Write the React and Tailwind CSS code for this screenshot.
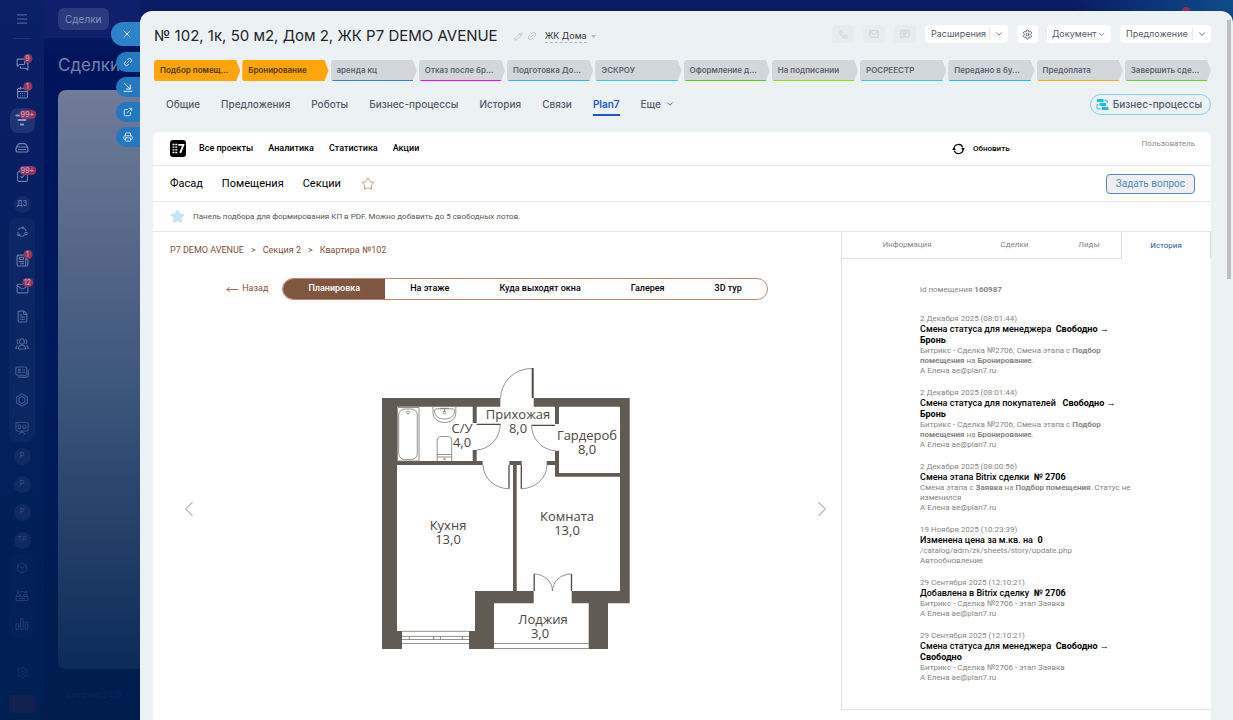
import React, { useState } from 'react';
import {
    Box,
    CalendarDays,
    ChevronDown,
    ChevronLeft,
    ChevronRight,
    ExternalLink,
    FileText,
    Link2,
    Mail,
    Menu,
    MessageSquareText,
    MessagesSquare,
    MoveLeft,
    Newspaper,
    Pencil,
    Phone,
    Printer,
    Settings,
    SquareCheck,
    Star,
    X
} from 'lucide-react';

const FunnelIcon = () => (
    <svg width="14" height="14" viewBox="0 0 14 14" fill="none" stroke="currentColor" strokeWidth="2" strokeLinecap="round">
        <path d="M1.500 2.500h11M3.500 7h7M5.800 11.500h2.400" />
    </svg>
);

const DriveIcon = () => (
    <svg width="14" height="14" viewBox="0 0 14 14" fill="none" stroke="currentColor" strokeWidth="1.200" strokeLinejoin="round">
        <path d="M1.500 6 3.200 3.400C3.600 2.900 4 2.600 4.600 2.600h4.800c.6 0 1 .3 1.400.8L12.500 6" />
        <rect x="1" y="6" width="12" height="5" rx="1.600" />
        <path d="M3.500 8.500h7" strokeLinecap="round" />
    </svg>
);

const RingIcon = () => (
    <svg width="12" height="12" viewBox="0 0 12 12" fill="none" stroke="currentColor" strokeWidth="1.100">
        <path d="M2.300 4A4.200 4.200 0 0 1 6 1.800M8 2.300A4.200 4.200 0 0 1 10 5M8.500 9.300A4.200 4.200 0 0 1 4 9.700M2 7.500A4.200 4.200 0 0 1 1.800 6" />
        <circle cx="2.700" cy="8.800" r="1" />
        <circle cx="10" cy="7.500" r="1.300" />
        <circle cx="7" cy="1.800" r=".8" />
    </svg>
);

const PeopleIcon = () => (
    <svg width="14" height="14" viewBox="0 0 14 14" fill="none" stroke="currentColor" strokeWidth="1.100" strokeLinejoin="round">
        <ellipse cx="7" cy="4.500" rx="2.300" ry="2.800" />
        <path d="M3.400 12c0-2.500 1.400-3.800 3.600-3.800s3.600 1.300 3.600 3.800zM3.600 2.600C2.300 2.800 1.800 4 2.200 5.300c.2.900.8 1.400 1.400 1.500M10.400 2.600c1.300.2 1.800 1.400 1.400 2.700-.2.900-.8 1.400-1.400 1.500M2.800 8.300C1.500 8.800.8 9.800.8 11.500h1.400M11.200 8.300c1.300.5 2 1.500 2 3.200h-1.400" />
    </svg>
);

const CardIcon = () => (
    <svg width="14" height="14" viewBox="0 0 14 14" fill="none" stroke="currentColor" strokeWidth="1.100" strokeLinecap="round" strokeLinejoin="round">
        <rect x=".8" y="2" width="11" height="8.300" rx="1.500" />
        <path d="M3.500 12.100h8c1.200 0 1.800-.6 1.800-1.800V5M7.800 5h2M7.800 7.300h2M2.800 8c.2-1.300 3-1.300 3.200 0" />
        <circle cx="4.400" cy="5" r=".9" />
    </svg>
);

const BoardIcon = () => (
    <svg width="14" height="14" viewBox="0 0 14 14" fill="none" stroke="currentColor" strokeWidth="1.100" strokeLinecap="round">
        <rect x="1" y="1.500" width="12" height="8.500" rx="1" />
        <path d="M3.200 4v3.500h2.300V4zM4.300 12.800 7 10.300l2.700 2.500" />
        <circle cx="9.300" cy="5.700" r="1.700" />
    </svg>
);

const RobotIcon = () => (
    <svg width="14" height="14" viewBox="0 0 14 14" fill="none" stroke="currentColor" strokeWidth="1.200" strokeLinejoin="round">
        <path d="M2 7a5 4.500 0 0 1 10 0M1.200 7.500h11.600v4H1.200zM3.300 3.600 2 1.200M10.700 3.600 12 1.200M4 9.500h6" />
        <circle cx="5" cy="5.800" r=".5" />
        <circle cx="9" cy="5.800" r=".5" />
    </svg>
);

const BarsIcon = () => (
    <svg width="14" height="14" viewBox="0 0 14 14" fill="none" stroke="currentColor" strokeWidth="1.200">
        <rect x="1" y="6.500" width="2.600" height="6" rx="1" />
        <rect x="5.600" y="1.500" width="2.600" height="11" rx="1" />
        <rect x="10.200" y="5" width="2.600" height="7.500" rx="1" />
    </svg>
);

const HexIcon = () => (
    <svg width="14" height="14" viewBox="0 0 14 14" fill="none" stroke="currentColor" strokeWidth="1.100" strokeLinejoin="round">
        <path d="M7 .9 12.300 3.900v6.200L7 13.100 1.700 10.100V3.900z" />
        <path d="M7 3.600 10 5.300v3.400L7 10.400 4 8.700V5.300z" />
    </svg>
);

const ArrowCornerIcon = () => (
    <svg width="10" height="10" viewBox="0 0 10 10" fill="none" stroke="currentColor" strokeWidth="1" strokeLinecap="round" strokeLinejoin="round">
        <path d="M1.500 1.500 7 6.800M7.300 3v4H3.300M1 9.300h8" />
    </svg>
);

const ProcessIcon = () => (
    <svg width="13" height="13" viewBox="0 0 13 13" fill="#19bdf2">
        <rect x="1" y="1" width="6.500" height="3" rx="0.600" />
        <rect x="3.500" y="5" width="6.500" height="3" rx="0.600" />
        <rect x="6" y="9" width="6.500" height="3" rx="0.600" />
        <path d="M8.500 2.300h2.700v2.500M2 6.500H1v4.200h3.500" fill="none" stroke="#19bdf2" strokeWidth="1" />
    </svg>
);

const RefreshIcon = () => (
    <svg width="13" height="12" viewBox="0 0 13 12" fill="none" stroke="#000" strokeWidth="1.200">
        <path d="M1.900 6A4.600 4.600 0 0 1 10.800 4.400M11.100 6A4.600 4.600 0 0 1 2.200 7.600" />
        <path d="M9.100 5h3.800L11 7.400zM.1 7h3.800L2 4.600z" fill="#000" stroke="none" />
    </svg>
);

const LogoIcon = () => (
    <svg width="16" height="17" viewBox="0 0 16 17">
        <rect width="16" height="17" rx="3" fill="#000" />
        <path d="M2.500 4.500h2M2.500 7.200h2M2.500 9.900h2M2.500 12.500h2M5.300 4.500h2M5.300 7.200h2M5.300 9.900h2M5.300 12.500h2" stroke="#fff" strokeWidth="1.300" />
        <path d="M8.300 4.900h5L10.300 12.800" fill="none" stroke="#fff" strokeWidth="1.900" />
    </svg>
);

const railItems = [
    { icon: <MessagesSquare size={13} strokeWidth={2} />, badge: '9', tone: 'text-[#7d8db9]' },
    { icon: <CalendarDays size={13} strokeWidth={2} />, badge: '1', tone: 'text-[#7d8db9]' },
    { icon: <FunnelIcon />, badge: '99+', tone: 'text-[#8b9ac4]', active: true },
    { icon: <DriveIcon />, tone: 'text-[#7485b0]' },
    { icon: <SquareCheck size={13} strokeWidth={2} />, badge: '99+', tone: 'text-[#6f80ac]' },
    { text: 'ДЗ', tone: 'text-[#6679a8]' }
];

const groupItems = [
    { icon: <RingIcon />, tone: 'text-[#5a70a0]' },
    { icon: <Newspaper size={13} strokeWidth={2} className="-scale-x-100" />, badge: '1', tone: 'text-[#6a7da8]' },
    { icon: <Mail size={13} strokeWidth={2} />, badge: '12', tone: 'text-[#6276a4]' },
    { icon: <FileText size={13} strokeWidth={2} />, tone: 'text-[#586e9d]' },
    { icon: <PeopleIcon />, tone: 'text-[#4f6697]' },
    { icon: <CardIcon />, tone: 'text-[#476091]' },
    { icon: <HexIcon />, tone: 'text-[#3e588b]' },
    { icon: <BoardIcon />, tone: 'text-[#365084]' }
];

const letterItems = [
    { text: 'P', tone: 'text-[#345087]' },
    { text: 'P', tone: 'text-[#2e4a82]' },
    { text: 'P', tone: 'text-[#28457d]' },
    { text: 'TP', tone: 'text-[#244178]' }
];

const toolItems = [
    { icon: <Box size={12} strokeWidth={2} />, tone: 'text-[#1e3c73]' },
    { icon: <RobotIcon />, tone: 'text-[#1e3d74]' },
    { icon: <BarsIcon />, tone: 'text-[#1c3a70]' }
];

const stages = [
    { name: 'Подбор помещ...', done: true, line: 'bg-[#ffa509]' },
    { name: 'Бронирование', done: true, line: 'bg-[#ffa509]' },
    { name: 'аренда кц', line: 'bg-[#2f80ed]' },
    { name: 'Отказ после бр...', line: 'bg-[#ff00ff]' },
    { name: 'Подготовка До...', line: 'bg-[#22b9ff]' },
    { name: 'ЭСКРОУ', line: 'bg-[#39c7e6]' },
    { name: 'Оформление д...', line: 'bg-[#55d000]' },
    { name: 'На подписании', line: 'bg-[#8fdc00]' },
    { name: 'РОСРЕЕСТР', line: 'bg-[#39c7e6]' },
    { name: 'Передано в бу...', line: 'bg-[#22b9ff]' },
    { name: 'Предоплата', line: 'bg-[#ffa900]' },
    { name: 'Завершить сде...', line: 'bg-[#6ad41a]' }
];

const dealTabs = ['Общие', 'Предложения', 'Роботы', 'Бизнес-процессы', 'История', 'Связи', 'Plan7'];
const viewTabs = ['Планировка', 'На этаже', 'Куда выходят окна', 'Галерея', '3D тур'];

const sideTabs = [
    { name: 'Информация', width: 'w-[130px]' },
    { name: 'Сделки', width: 'w-[85px]' },
    { name: 'Лиды', width: 'w-16' },
    { name: 'История', width: 'flex-1' }
];

const history = [
    {
        date: '2 Декабря 2025 (08:01:44)',
        title: <>Смена статуса для менеджера&nbsp; <b>Свободно → Бронь</b></>,
        text: <>Битрикс - Сделка №2706; Смена этапа с <b>Подбор помещения</b> на <b>Бронирование</b>.</>,
        author: 'А Елена ae@plan7.ru'
    },
    {
        date: '2 Декабря 2025 (08:01:44)',
        title: <>Смена статуса для покупателей&nbsp;&nbsp; <b>Свободно → Бронь</b></>,
        text: <>Битрикс - Сделка №2706; Смена этапа с <b>Подбор помещения</b> на <b>Бронирование</b>.</>,
        author: 'А Елена ae@plan7.ru'
    },
    {
        date: '2 Декабря 2025 (08:00:56)',
        title: <>Смена этапа Bitrix сделки&nbsp; <b>№ 2706</b></>,
        text: <>Смена этапа с <b>Заявка</b> на <b>Подбор помещения</b>. Статус не изменился</>,
        author: 'А Елена ae@plan7.ru'
    },
    {
        date: '19 Ноября 2025 (10:23:39)',
        title: <>Изменена цена за м.кв. на&nbsp; <b>0</b></>,
        text: '/catalog/adm/zk/sheets/story/update.php',
        author: 'Автообновление'
    },
    {
        date: '29 Сентября 2025 (12:10:21)',
        title: <>Добавлена в Bitrix сделку&nbsp; <b>№ 2706</b></>,
        text: 'Битрикс - Сделка №2706 - этап Заявка',
        author: 'А Елена ae@plan7.ru'
    },
    {
        date: '29 Сентября 2025 (12:10:21)',
        title: <>Смена статуса для менеджера&nbsp; <b>Свободно → Свободно</b></>,
        text: 'Битрикс - Сделка №2706 - этап Заявка',
        author: 'А Елена ae@plan7.ru'
    }
];

const RailItem = ({ item }) => (
    <li className="flex h-7 items-center justify-center">
        <a
            href="#"
            className={`relative flex h-[25px] w-[25px] items-center justify-center ${item.tone} ${item.active ? 'rounded-lg bg-[#1c3674]' : ''}`}
        >
            {item.icon}
            {item.text && (
                <span className="flex h-[17px] w-[17px] items-center justify-center rounded-full bg-white/5 text-[7px] font-semibold">
                    {item.text}
                </span>
            )}
            {item.badge && (
                <span className="absolute top-[2px] left-[18px] flex h-[9px] min-w-[9px] -translate-x-1/2 items-center justify-center rounded-full bg-[#93345a] px-[2px] text-[7px] leading-none font-medium text-[#b9a3c0]">
                    {item.badge}
                </span>
            )}
        </a>
    </li>
);

const Rail = () => (
    <nav className="flex w-11 shrink-0 flex-col bg-linear-to-b from-[#0a1f66] via-[#03205d] to-[#001f51] px-[9px]">
        <button className="flex h-[38px] items-center justify-center text-[#6c7cab]" aria-label="Меню">
            <Menu size={14} strokeWidth={1.5} />
        </button>
        <div className="mx-1 mb-[11px] border-t border-[#1d326f]" />
        <ul>{railItems.map((item, i) => <RailItem key={i} item={item} />)}</ul>
        <ul className="rounded-lg bg-white/[0.03]">{groupItems.map((item, i) => <RailItem key={i} item={item} />)}</ul>
        <ul>{letterItems.map((item, i) => <RailItem key={i} item={item} />)}</ul>
        <ul className="rounded-lg bg-white/[0.01]">{toolItems.map((item, i) => <RailItem key={i} item={item} />)}</ul>
        <a href="#" className="mt-7 flex justify-center text-[#0f2c62]" aria-label="Настройки">
            <Settings size={13} />
        </a>
        <div className="mt-4 h-[18px] rounded bg-[#14204f]" />
    </nav>
);

const SliderLabels = () => (
    <div className="absolute top-[22px] right-0 flex flex-col items-end gap-[5px] text-[#dcebf8]">
        <button className="mb-px flex h-6 w-[29px] items-center rounded-l-full bg-[#2d83cb] pl-[10px]" aria-label="Закрыть">
            <X size={12} strokeWidth={2} />
        </button>
        <button className="flex h-5 w-6 items-center rounded-l-full bg-[#2478c0] pl-[7px]" aria-label="Ссылка">
            <Link2 size={10} className="-rotate-45" />
        </button>
        <button className="flex h-5 w-6 items-center rounded-l-full bg-[#2478c0] pl-[7px]" aria-label="Свернуть">
            <ArrowCornerIcon />
        </button>
        <button className="flex h-5 w-6 items-center rounded-l-full bg-[#2478c0] pl-[7px]" aria-label="Открыть">
            <ExternalLink size={10} />
        </button>
        <button className="flex h-5 w-6 items-center rounded-l-full bg-[#2478c0] pl-[7px]" aria-label="Печать">
            <Printer size={10} />
        </button>
    </div>
);

const Header = () => (
    <header className="flex h-[18px] items-center">
        <div className="flex items-center pt-1">
            <h1 className="mr-4 text-[15px] leading-5 whitespace-nowrap text-[#22252a]">№ 102, 1к, 50 м2, Дом 2, ЖК P7 DEMO AVENUE</h1>
            <Pencil size={9} className="text-[#b9bdc3]" />
            <Link2 size={10} className="ml-1 -rotate-45 text-[#b9bdc3]" />
            <button className="ml-2 flex items-center gap-1 text-[9px] whitespace-nowrap text-[#333]">
                <span className="border-b border-dashed border-[#b5b9bf] leading-3">ЖК Дома</span>
                <svg width="5" height="3" viewBox="0 0 5 3"><path d="M0 0h5L2.500 3z" fill="#b5b9bf" /></svg>
            </button>
        </div>
        <div className="ml-auto flex gap-[9px] text-[9px] text-[#525c69]">
            <button className="flex h-[18px] w-[22px] items-center justify-center rounded bg-[#e9ecee] text-[#c9ccd1]" aria-label="Позвонить">
                <Phone size={9} />
            </button>
            <button className="flex h-[18px] w-[22px] items-center justify-center rounded bg-[#e9ecee] text-[#c9ccd1]" aria-label="Почта">
                <Mail size={10} />
            </button>
            <button className="flex h-[18px] w-[22px] items-center justify-center rounded bg-[#e9ecee] text-[#c9ccd1]" aria-label="Чат">
                <MessageSquareText size={10} />
            </button>
            <button className="flex h-[18px] w-[83px] items-center justify-between rounded bg-white pr-1 pl-[6px]">
                Расширения
                <span className="flex h-3 items-center border-l border-[#e6e8ea] pl-1"><ChevronDown size={10} /></span>
            </button>
            <button className="flex h-[18px] w-[21px] items-center justify-center rounded bg-white" aria-label="Настройки">
                <Settings size={11} />
            </button>
            <button className="flex h-[18px] w-16 items-center justify-between rounded bg-white px-[5px]">
                Документ
                <ChevronDown size={9} className="shrink-0" />
            </button>
            <button className="flex h-[18px] w-[91px] items-center justify-between rounded bg-white pr-1 pl-[6px]">
                Предложение
                <span className="flex h-3 items-center border-l border-[#e6e8ea] pl-1"><ChevronDown size={10} /></span>
            </button>
        </div>
    </header>
);

const StageBar = () => (
    <ol className="mt-[17px] grid grid-cols-12 gap-[2px]">
        {stages.map((stage) => (
            <li
                key={stage.name}
                className={`flex h-[21px] flex-col overflow-hidden rounded-l-[3px] text-[8px] font-semibold whitespace-nowrap [clip-path:polygon(0_0,calc(100%_-_4px)_0,100%_50%,calc(100%_-_4px)_100%,0_100%)] ${stage.done ? 'bg-[#ffa509] text-[#4a3514]' : 'bg-[#d3d7dc] text-[#5b6470]'}`}
            >
                <span className="h-5 overflow-hidden pl-[6px] leading-[21px]">{stage.name}</span>
                <span className={`h-px w-full shrink-0 ${stage.line}`} />
            </li>
        ))}
    </ol>
);

const DealTabs = () => (
    <div className="mt-[11px] flex items-center pl-3 text-[10px] font-medium whitespace-nowrap text-[#525c69]">
        <nav className="flex gap-[21px]">
            {dealTabs.map((tab) => (
                <a
                    key={tab}
                    href="#"
                    className={`border-b-2 pt-[3px] leading-[19px] ${tab === 'Plan7' ? 'border-[#1f55c8] font-semibold text-[#1f55c8]' : 'border-transparent'}`}
                >
                    {tab}
                </a>
            ))}
            <button className="flex items-center gap-1">Еще <ChevronDown size={10} /></button>
        </nav>
        <button className="ml-auto flex h-[21px] items-center gap-1 rounded-full border border-[#7fd3f3] pr-2 pl-[5px]">
            <ProcessIcon />
            Бизнес-процессы
        </button>
    </div>
);

const FloorPlan = () => (
    <svg width="252" height="286" viewBox="380 366 252 286" role="img" aria-label="Планировка квартиры">
        <g fill="#625b54">
            <path d="M382 398h118.300v8.700H397V631h5v18H382z" />
            <path d="M533.700 398h96V603.300h-21.700V649h-19.300V603.300h-17V591H620V406.700h-86.300z" />
            <path d="M475 591h58.700v12.300H494V649h-25V631h6z" />
            <path d="M472.700 406h4v17h-4zM472.700 450h4v11h6v4H397v-4h75.700z" />
            <path d="M509.300 461h12.400v4h-5v126h-3.700V465h-3.700z" />
            <path d="M555 406h4v18h-4zM555 450.700h4V473h61v3.700h-65V465h-8.300v-4H555z" />
        </g>
        <g fill="none" stroke="#4f4943" strokeWidth="1.300">
            <path d="M532.700 368v30" strokeWidth="2" />
            <path d="M476.700 424.300H500.500M531.500 425.400H555M509 465v23.700M521.300 465v23.700M534.200 574v17M571.500 574v17" />
        </g>
        <g fill="none" stroke="#7b7671" strokeWidth="0.800">
            <path d="M532 368.500A31 30 0 0 0 500.600 398.500" />
            <path d="M500.300 424A25 26 0 0 1 476.700 450M531.500 425A25 26 0 0 0 555 450.700" />
            <path d="M483 465A26 24 0 0 0 508.700 488.700M547 465A26 24 0 0 1 521.500 488.700" />
            <path d="M534 574A18.500 17 0 0 1 552.500 591A18.500 17 0 0 1 571.500 574" />
            <path d="M402 631.300h67M402 636.400h67M402 639.500h67M402 643.500h67M409.300 636.400v3.100M433.500 636.400v3.100M440.500 636.400v3.100M462.500 636.400v3.100" />
            <path d="M494 643.500h94.700M494 648.500h94.700" />
            <path d="M397.500 407.500h21.500v53.500h-21.500z" />
            <rect x="398.700" y="409" width="18.600" height="50.500" rx="6" />
            <circle cx="408" cy="412.500" r="1.400" />
            <path d="M433 406.700v6c0 6 5 9.800 11.500 9.800s11.300-3.800 11.300-9.800v-6" />
            <path d="M434.500 411c0-1.500 1-2.200 2.500-2.200h15c1.500 0 2.500.7 2.500 2.200 0 5-4 8-10 8s-10-3-10-8z" />
            <path d="M440 408.300h9M444.500 408v4" />
            <circle cx="444.500" cy="412.500" r="1.300" />
            <path d="M437.200 461v-20c0-3 1.500-4.500 4.500-4.500h5.500c3 0 4.500 1.500 4.500 4.500v20M437.200 454.500h14.500M437.200 457h14.500" />
            <circle cx="444.500" cy="459" r=".8" />
        </g>
        <g fill="#4c4540" fontSize="13" textAnchor="middle" className="font-['Open_Sans','Noto_Sans',sans-serif]">
            <text x="518" y="419">Прихожая</text>
            <text x="518" y="433">8,0</text>
            <text x="462" y="433">С/У</text>
            <text x="462" y="447">4,0</text>
            <text x="587" y="440">Гардероб</text>
            <text x="587" y="454">8,0</text>
            <text x="448" y="530">Кухня</text>
            <text x="448" y="544">13,0</text>
            <text x="567" y="521">Комната</text>
            <text x="567" y="535">13,0</text>
            <text x="543" y="624">Лоджия</text>
            <text x="540" y="638">3,0</text>
        </g>
    </svg>
);

const PlanView = () => {
    const [view, setView] = useState('Планировка');

    return (
        <section className="flex-1">
            <div className="flex gap-[7px] px-[17px] pt-3 text-[9px] leading-3 text-[#7f4f36]">
                <a href="#">P7 DEMO AVENUE</a>
                <span>&gt;</span>
                <a href="#">Секция 2</a>
                <span>&gt;</span>
                <a href="#">Квартира №102</a>
            </div>
            <div className="mt-[22px] flex items-center justify-center gap-[14px] text-[9px] whitespace-nowrap">
                <a href="#" className="flex items-center gap-[3px] text-[#7f4f36]"><MoveLeft size={13} strokeWidth={1.5} /> Назад</a>
                <div className="flex h-[22px] overflow-hidden rounded-full border border-[#b98a72]">
                    {viewTabs.map((tab) => (
                        <button
                            key={tab}
                            onClick={() => setView(tab)}
                            className={`px-[25px] font-medium ${view === tab ? 'bg-[#7f5640] text-white' : 'text-black'}`}
                        >
                            {tab}
                        </button>
                    ))}
                </div>
            </div>
            <div className="mt-[66px] flex items-center justify-between pr-[6px] pl-[23px] text-[#b9b9b9]">
                <button aria-label="Назад"><ChevronLeft size={26} strokeWidth={1} /></button>
                <FloorPlan />
                <button aria-label="Вперед"><ChevronRight size={26} strokeWidth={1} /></button>
            </div>
        </section>
    );
};

const HistoryPanel = () => (
    <aside className="w-[370px] shrink-0 border-l border-[#e3e3e3] text-[8px] text-[#858585]">
        <div className="flex h-[27px]">
            {sideTabs.map((tab) => (
                <button
                    key={tab.name}
                    className={`${tab.width} ${tab.name === 'История' ? 'border-x border-[#dcdcdc] text-[#2a55b5]' : 'border-b border-[#dcdcdc]'}`}
                >
                    {tab.name}
                </button>
            ))}
        </div>
        <div className="border-b border-[#e3e3e3] pb-[26px] pl-[78px] leading-[10px]">
            <p className="pt-[26px]">id помещения <b>160987</b></p>
            <ul className="mt-[19px] w-[215px]">
                {history.map((entry, i) => (
                    <li key={i} className="mb-3 last:mb-0">
                        <p>{entry.date}</p>
                        <p className="text-[9px] leading-[11px] font-medium text-black">{entry.title}</p>
                        <p>{entry.text}</p>
                        <p>{entry.author}</p>
                    </li>
                ))}
            </ul>
        </div>
    </aside>
);

const ProjectFrame = () => (
    <div className="mt-4 -ml-px flex-1 rounded-t-md bg-white font-[Roboto,sans-serif] text-black">
        <div className="flex h-[34px] items-center border-b border-[#e6e6e6] pr-4 pl-[17px]">
            <LogoIcon />
            <nav className="ml-[13px] flex gap-[15px] text-[9px] font-medium">
                <a href="#">Все проекты</a>
                <a href="#">Аналитика</a>
                <a href="#">Статистика</a>
                <a href="#">Акции</a>
            </nav>
            <button className="mr-[132px] ml-auto flex items-center gap-2 text-[8px] font-medium"><RefreshIcon /> Обновить</button>
            <span className="self-start pt-[6px] text-[8px] leading-[11px] text-[#8a8a8a]">Пользователь</span>
        </div>
        <div className="flex h-9 items-center border-b border-[#e6e6e6] pr-4 pl-[17px] text-[11px]">
            <nav className="flex items-center gap-[19px] pt-px">
                <a href="#">Фасад</a>
                <a href="#">Помещения</a>
                <a href="#">Секции</a>
            </nav>
            <Star size={14} strokeWidth={1.5} className="ml-5 text-[#b98a72]" />
            <button className="ml-auto h-5 rounded border border-[#5b84cf] bg-[#efefef] px-[9px] text-[10px] text-[#4b8acb]">Задать вопрос</button>
        </div>
        <div className="flex h-[30px] items-center gap-2 border-b border-[#e6e6e6] pr-4 pl-[17px] text-[8px] text-[#555]">
            <Star size={15} className="fill-[#c4e4f1] text-[#c4e4f1]" />
            Панель подбора для формирования КП в PDF. Можно добавить до 5 свободных лотов.
        </div>
        <div className="flex">
            <PlanView />
            <HistoryPanel />
        </div>
    </div>
);

const App = () => (
    <div className="relative flex h-screen overflow-hidden bg-[radial-gradient(circle_at_100%_0,#0f4c8c,transparent_160px),linear-gradient(#0b1c66,#00145c_60px,#001a5c_50%,#001d4e)] font-[Inter,sans-serif]">
        <Rail />
        <div className="relative flex w-24 shrink-0 flex-col">
            <div className="flex h-[38px] items-center bg-[#101f6b] pl-[14px]">
                <a href="#" className="rounded-md bg-[#2a3a7c] px-[7px] text-[10px] leading-[22px] text-[#8793b9]">Сделки</a>
            </div>
            <h2 className="mt-4 pl-[14px] text-[17px] leading-[22px] text-[#7582ab]">Сделки</h2>
            <div className="mt-[14px] ml-[14px] flex-1 rounded-l-lg bg-linear-to-b from-[#707b98] via-[#3e577c] to-[#0b2b58]" />
            <footer className="h-[51px] pt-5 pl-[22px] text-[9px] leading-3 text-[#08275a]">Битрикс24©</footer>
            <SliderLabels />
        </div>
        <span className="absolute top-[7px] right-[43px] h-2 w-2 rounded-full bg-[#8f2f56]" />
        <main className="relative mt-[11px] flex flex-1 flex-col overflow-hidden rounded-t-xl bg-[#ecf1f4] pt-[14px] pr-[22px] pl-[14px]">
            <Header />
            <StageBar />
            <DealTabs />
            <ProjectFrame />
            <div className="absolute top-[9px] right-[2px] h-[259px] w-1 bg-[#bfbfbf]" />
        </main>
    </div>
);

export default App;
